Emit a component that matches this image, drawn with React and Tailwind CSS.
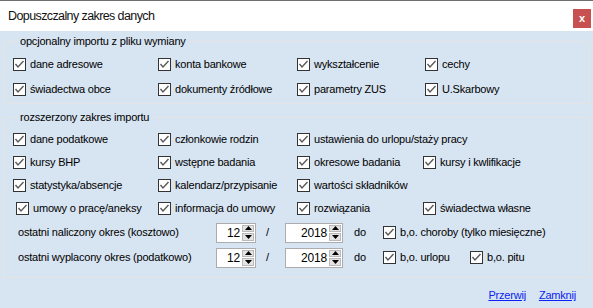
import React from 'react';

// pola w dwoch grupach okna importu
const OPTIONAL = [
  'dane adresowe', 'konta bankowe', 'wykształcenie', 'cechy',
  'świadectwa obce', 'dokumenty źródłowe', 'parametry ZUS', 'U.Skarbowy',
];

const Check = ({ label, className = '' }) => (
  <label className={`flex items-center gap-[4px] whitespace-nowrap ${className}`}>
    <span className="w-[13px] h-[13px] shrink-0 border border-[#333333] bg-white flex items-center justify-center">
      <svg width="11" height="11" viewBox="0 0 11 11">
        <path d="M1.5 5 L4 8 L9.5 2" fill="none" stroke="#5a5a5a" strokeWidth="1.4" />
      </svg>
    </span>
    <span>{label}</span>
  </label>
);

const Spin = ({ value, className = '' }) => (
  <div className={`flex h-[20px] border border-[#acacac] bg-white ${className}`}>
    <span className="flex-1 text-right text-[12px] leading-[18px] pr-[1px]">{value}</span>
    <div className="w-[14px] flex flex-col gap-[1px] p-[1px]">
      <div className="flex-1 bg-[#e3e3e3] border border-[#b9b9b9] flex items-center justify-center">
        <svg width="7" height="4" viewBox="0 0 7 4"><path d="M0 4 L3.5 0 L7 4 Z" fill="#000" /></svg>
      </div>
      <div className="flex-1 bg-[#e3e3e3] border border-[#b9b9b9] flex items-center justify-center">
        <svg width="7" height="4" viewBox="0 0 7 4"><path d="M0 0 L3.5 4 L7 0 Z" fill="#000" /></svg>
      </div>
    </div>
  </div>
);

export default function App() {
  return (
    <div className="w-[593px] h-[308px] overflow-hidden bg-[#d7e4f1] text-[11px] tracking-[-0.2px] text-black font-['Liberation_Sans',Arial,sans-serif] flex flex-col border-t border-[#6e6e6e]">
      {/* Title bar */}
      <div className="h-[30px] bg-white flex items-center justify-between pl-[8px] pr-[2px] shrink-0">
        <span className="text-[12.5px] tracking-[-0.6px] text-[#111]">Dopuszczalny zakres danych</span>
        <div className="w-[18px] h-[19px] bg-[#c75050] text-white text-[11px] font-bold flex items-center justify-center leading-none mt-[4px]">x</div>
      </div>

      {/* Group 1 */}
      <fieldset className="ml-[4px] mr-[3px] mt-[3px] border border-[#e4e4e4] pl-[8px] pt-[4px] pb-[1px]">
        <legend className="ml-[5px] px-[2px] leading-[14px]">opcjonalny importu z pliku wymiany</legend>
        <div className="grid grid-cols-[145px_139px_128px_1fr] auto-rows-[25px] items-center">
          {OPTIONAL.map((l) => <Check key={l} label={l} />)}
        </div>
      </fieldset>

      {/* Group 2 */}
      <fieldset className="ml-[4px] mr-[3px] mt-[6px] border border-[#e4e4e4] pl-[8px] pt-[4px] pb-[7px]">
        <legend className="ml-[5px] px-[2px] leading-[14px]">rozszerzony zakres importu</legend>
        <div className="grid grid-cols-[145px_139px_126px_1fr] auto-rows-[23px] items-center">
          <Check label="dane podatkowe" />
          <Check label="członkowie rodzin" />
          <Check label="ustawienia do urlopu/staży pracy" className="col-span-2" />
          <Check label="kursy BHP" />
          <Check label="wstępne  badania" />
          <Check label="okresowe badania" />
          <Check label="kursy i kwlifikacje" />
          <Check label="statystyka/absencje" />
          <Check label="kalendarz/przypisanie" />
          <Check label="wartości składników" />
          <span />
          <Check label="umowy o pracę/aneksy" className="ml-[3px]" />
          <Check label="informacja do umowy" />
          <Check label="rozwiązania" />
          <Check label="świadectwa własne" />
        </div>

        <div className="flex items-center h-[25px]">
          <span className="w-[203px] pl-[5px]">ostatni naliczony okres (kosztowo)</span>
          <Spin value="12" className="w-[40px]" />
          <span className="w-[29px] pl-[10px]">/</span>
          <Spin value="2018" className="w-[58px]" />
          <span className="w-[40px] pl-[11px]">do</span>
          <Check label="b,o. choroby (tylko miesięczne)" />
        </div>
        <div className="flex items-center h-[25px]">
          <span className="w-[203px] pl-[5px]">ostatni wyplacony okres (podatkowo)</span>
          <Spin value="12" className="w-[40px]" />
          <span className="w-[29px] pl-[10px]">/</span>
          <Spin value="2018" className="w-[58px]" />
          <span className="w-[40px] pl-[11px]">do</span>
          <Check label="b,o. urlopu" className="w-[87px]" />
          <Check label="b,o. pitu" />
        </div>
      </fieldset>

      {/* Links */}
      <div className="flex justify-end gap-[13px] pr-[17px] mt-[10px] leading-[14px]">
        <a className="text-[#0a22f5] underline cursor-pointer">Przerwij</a>
        <a className="text-[#0a22f5] underline cursor-pointer">Zamknij</a>
      </div>
    </div>
  );
}
